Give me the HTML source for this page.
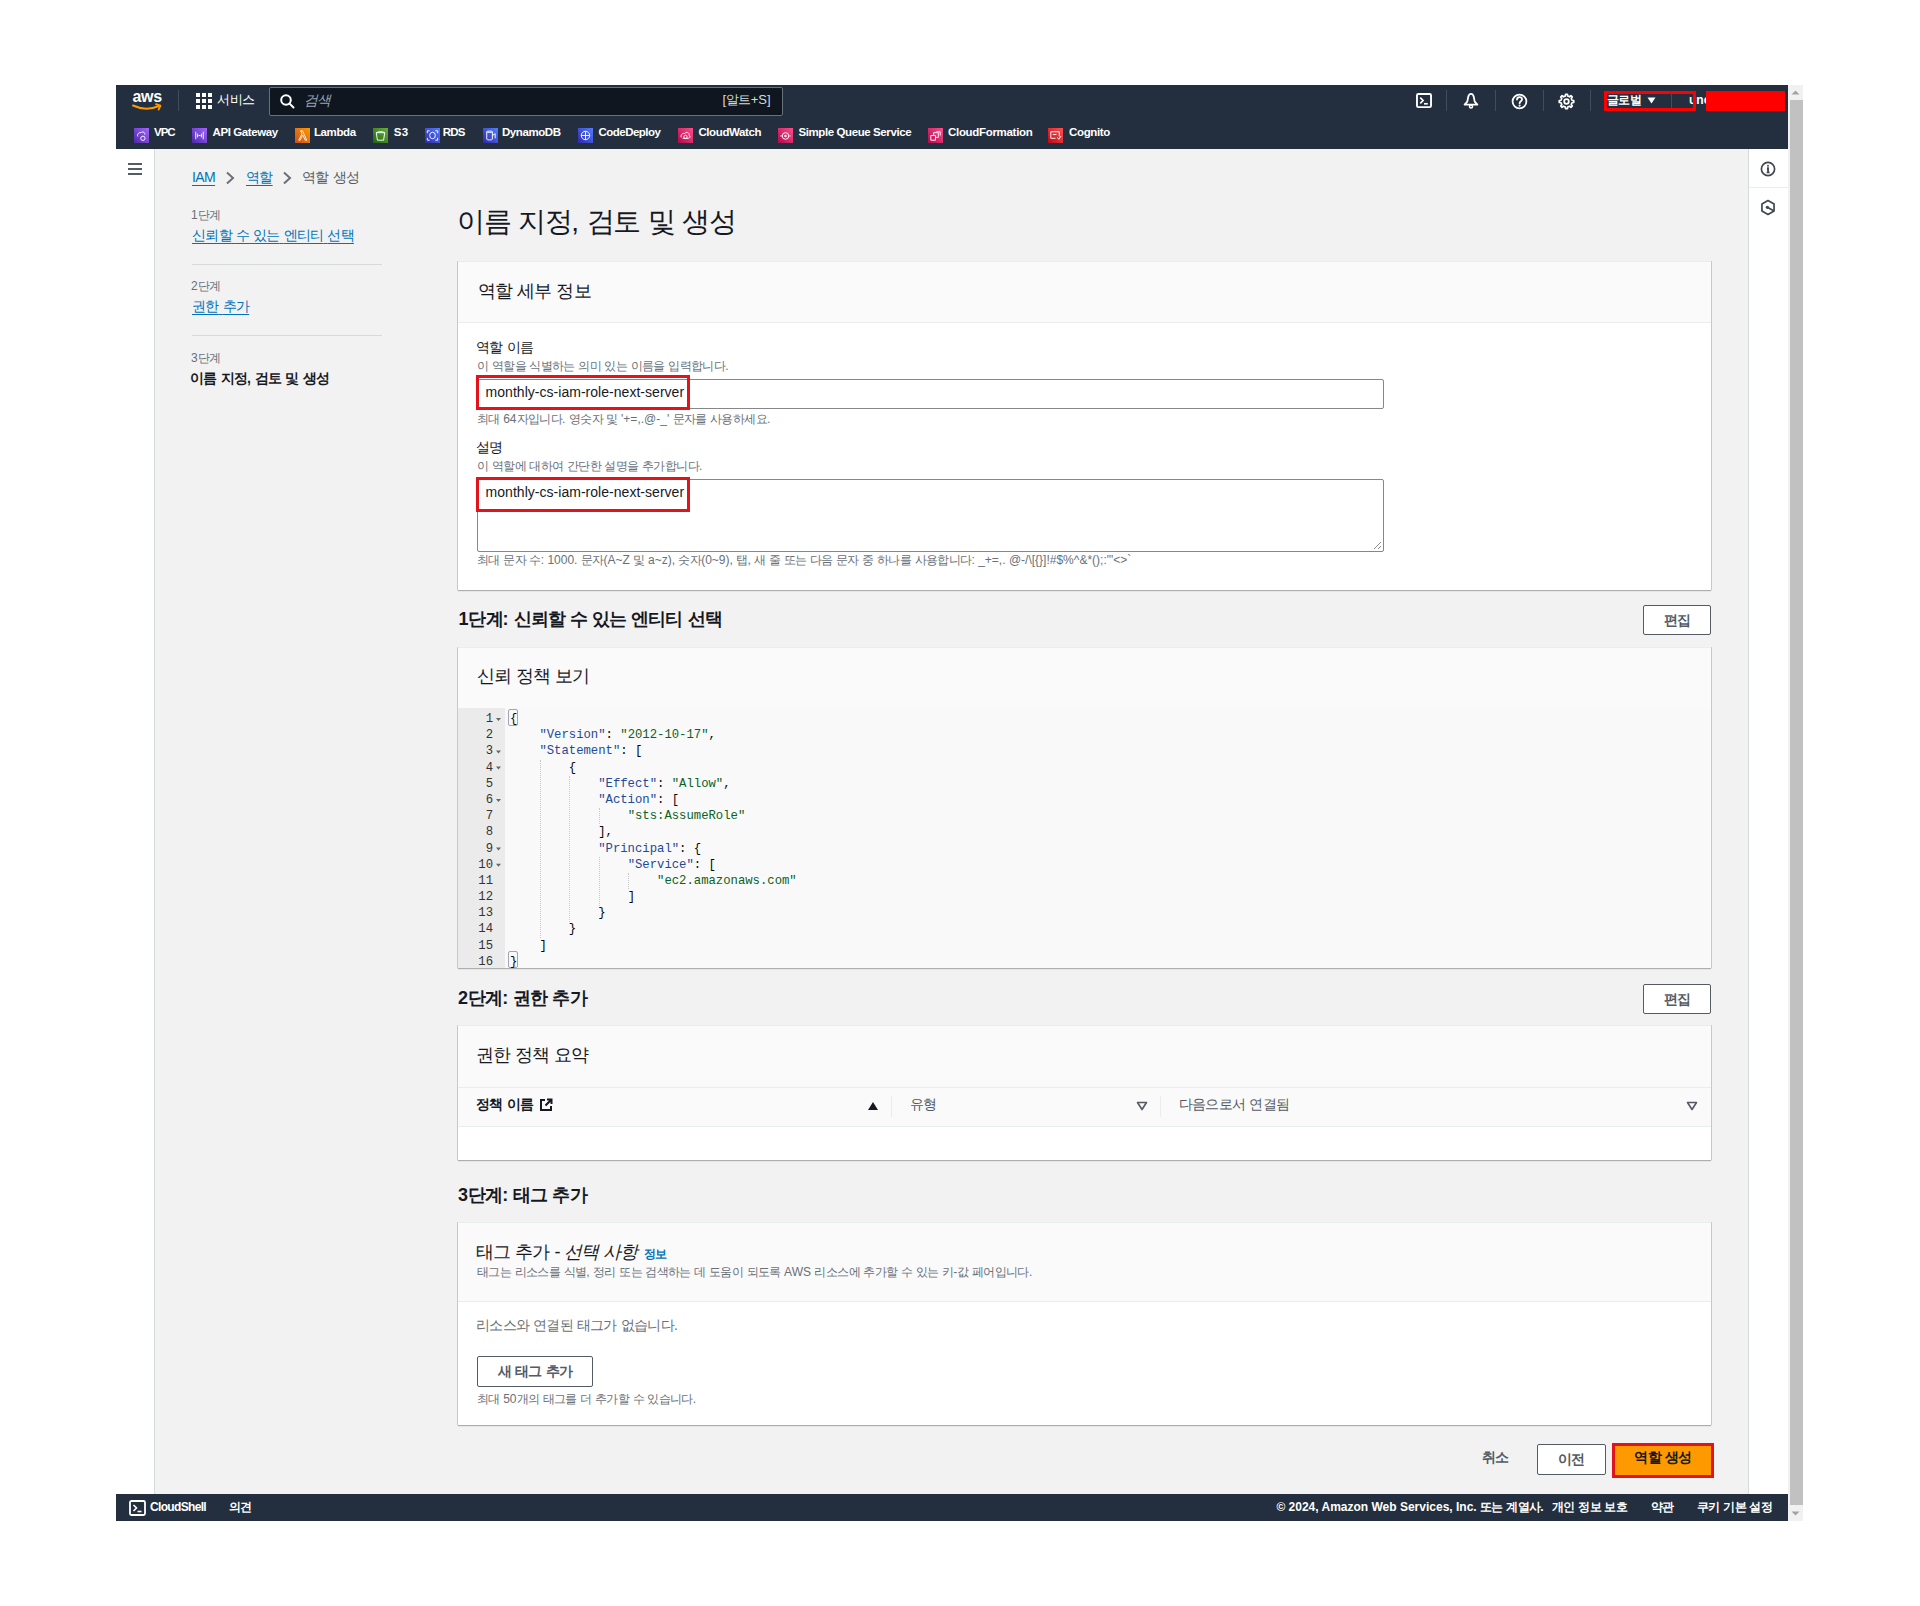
<!DOCTYPE html>
<html lang="ko">
<head>
<meta charset="utf-8">
<style>
html,body{margin:0;padding:0;}
body{width:1920px;height:1606px;background:#fff;position:relative;overflow:hidden;font-family:"Liberation Sans",sans-serif;color:#16191f;}
.a{position:absolute;}
.t{position:absolute;white-space:nowrap;line-height:20px;height:20px;}
.hdr{left:116px;top:85px;width:1672px;height:64px;background:#232f3e;}
.sep{position:absolute;width:1px;background:#414d5c;}
.svc{position:absolute;top:122px;height:20px;line-height:20px;font-size:11.5px;font-weight:bold;color:#fff;white-space:nowrap;}
.ico{position:absolute;top:128px;width:15px;height:15px;}
.lnk{color:#0073bb;text-decoration:underline;text-underline-offset:3px;}
.panel{position:absolute;left:458px;width:1253px;background:#fff;border-top:1px solid #eaeded;box-shadow:0 1px 1px 0 rgba(0,0,0,.28),1px 0 0 0 rgba(0,0,0,.13),-1px 0 0 0 rgba(0,0,0,.13);}
.ph{position:absolute;left:0;top:0;width:100%;background:#fafafa;border-bottom:1px solid #eaeded;}
.h2{font-size:18px;color:#16191f;}
.h3{font-size:18px;font-weight:bold;color:#16191f;}
.s12{font-size:12px;color:#687078;}
.btn{position:absolute;background:#fff;border:1px solid #545b64;border-radius:2px;box-sizing:border-box;text-align:center;font-size:14px;font-weight:bold;color:#545b64;}
.code{position:absolute;font-family:"Liberation Mono",monospace;font-size:12.25px;letter-spacing:0px;line-height:16.19px;white-space:pre;color:#080808;}
.k{font-size:1.3em;-webkit-text-stroke:0.45px currentColor;}
.v{color:#234a97;} .s{color:#0b6125;} .p{color:#080808;}
.hasko .k{font-size:1em;-webkit-text-stroke:0;letter-spacing:-0.05em;}
.hasko [id]:has(.k){letter-spacing:normal!important;}
.ig{position:absolute;width:0;border-left:1px dotted #c8c8c8;}
</style>
<script>
(function(){try{var c=document.createElement('canvas').getContext('2d');c.font='100px "Liberation Sans",sans-serif';var w=c.measureText('\uac00').width;if(w>85)document.documentElement.className+=' hasko';}catch(e){}})();
</script>
</head>
<body>

<!-- ===== top header ===== -->
<div class="a hdr"></div>
<!-- aws logo -->
<svg class="a" style="left:131px;top:89px" width="34" height="24" viewBox="0 0 34 24">
  <text x="1.5" y="13" font-family="Liberation Sans" font-weight="bold" font-size="16" fill="#fff" letter-spacing="-0.3">aws</text>
  <path d="M2 16.5 Q15 22.5 28 17" stroke="#ff9900" stroke-width="2" fill="none" stroke-linecap="round"/>
  <path d="M25 15.2 L29.5 16.6 L27.6 20.6" stroke="#ff9900" stroke-width="1.8" fill="none" stroke-linecap="round" stroke-linejoin="round"/>
</svg>
<div class="sep" style="left:178px;top:90px;height:21px"></div>
<!-- services grid -->
<svg class="a" style="left:196px;top:93px" width="16" height="16" viewBox="0 0 16 16" fill="#fff">
  <rect x="0" y="0" width="4" height="4"/><rect x="6" y="0" width="4" height="4"/><rect x="12" y="0" width="4" height="4"/>
  <rect x="0" y="6" width="4" height="4"/><rect x="6" y="6" width="4" height="4"/><rect x="12" y="6" width="4" height="4"/>
  <rect x="0" y="12" width="4" height="4"/><rect x="6" y="12" width="4" height="4"/><rect x="12" y="12" width="4" height="4"/>
</svg>
<div id="t1" class="t" style="letter-spacing:0.25px;left:217.3px;top:90px;font-size:13px;color:#fff;"><span class="k">서비스</span></div>
<!-- search -->
<div class="a" style="left:269px;top:87px;width:514px;height:29px;box-sizing:border-box;border:1px solid #687078;border-radius:2px;background:#0f1620;"></div>
<svg class="a" style="left:280px;top:94px" width="15" height="15" viewBox="0 0 15 15">
  <circle cx="6" cy="6" r="4.8" stroke="#fff" stroke-width="2" fill="none"/>
  <path d="M9.6 9.6 L13.5 13.5" stroke="#fff" stroke-width="2" stroke-linecap="round"/>
</svg>
<div id="t2" class="t" style="letter-spacing:0.00px;left:305.0px;top:90px;font-size:14px;color:#95a5b5;"><span style="display:inline-block;transform:skewX(-14deg)"><span class="k">검색</span></span></div>
<div id="t3" class="t" style="letter-spacing:0.76px;left:722.4px;top:90px;font-size:13px;color:#d5dbdb;">[<span class="k">알트</span>+S]</div>

<!-- right header icons -->
<svg class="a" style="left:1415.5px;top:93px" width="16" height="15" viewBox="0 0 17 16">
  <rect x="1" y="1" width="15" height="14" rx="1.5" stroke="#fff" stroke-width="2" fill="none"/>
  <path d="M4.5 5 L7.5 8 L4.5 11" stroke="#fff" stroke-width="1.8" fill="none"/>
  <path d="M8.5 11.5 H12.5" stroke="#fff" stroke-width="1.8"/>
</svg>
<div class="sep" style="left:1446px;top:90px;height:21px"></div>
<svg class="a" style="left:1463px;top:92px" width="16" height="17" viewBox="0 0 16 17">
  <path d="M8 1.8 C6.6 1.8 5.6 3 5.2 5 L4.3 9.6 L1.6 12.6 H14.4 L11.7 9.6 L10.8 5 C10.4 3 9.4 1.8 8 1.8 Z" stroke="#fff" stroke-width="1.8" fill="none" stroke-linejoin="round"/>
  <circle cx="8" cy="14.6" r="1.5" stroke="#fff" stroke-width="1.5" fill="none"/>
</svg>
<div class="sep" style="left:1495px;top:90px;height:21px"></div>
<svg class="a" style="left:1511px;top:93px" width="17" height="17" viewBox="0 0 17 17">
  <circle cx="8.5" cy="8.5" r="6.9" stroke="#fff" stroke-width="1.8" fill="none"/>
  <path d="M6 6.6 C6 4.9 7.1 4.1 8.5 4.1 C9.9 4.1 11 5 11 6.4 C11 8.2 8.6 8.3 8.6 10.2" stroke="#fff" stroke-width="1.8" fill="none" stroke-linecap="round"/>
  <circle cx="8.6" cy="12.6" r="1.1" fill="#fff"/>
</svg>
<div class="sep" style="left:1543px;top:90px;height:21px"></div>
<svg class="a" style="left:1558px;top:93px" width="17" height="17" viewBox="0 0 17 17">
  <path d="M13.97 7.28 L15.74 7.55 L15.74 9.45 L13.97 9.72 L13.23 11.50 L14.29 12.95 L12.95 14.29 L11.50 13.23 L9.72 13.97 L9.45 15.74 L7.55 15.74 L7.28 13.97 L5.50 13.23 L4.05 14.29 L2.71 12.95 L3.77 11.50 L3.03 9.72 L1.26 9.45 L1.26 7.55 L3.03 7.28 L3.77 5.50 L2.71 4.05 L4.05 2.71 L5.50 3.77 L7.28 3.03 L7.55 1.26 L9.45 1.26 L9.72 3.03 L11.50 3.77 L12.95 2.71 L14.29 4.05 L13.23 5.50 Z" stroke="#fff" stroke-width="1.7" fill="none" stroke-linejoin="round"/>
  <circle cx="8.5" cy="8.5" r="2.3" stroke="#fff" stroke-width="1.8" fill="none"/>
</svg>
<div class="sep" style="left:1590px;top:90px;height:21px"></div>
<!-- red redaction boxes -->
<div id="t4" class="t" style="letter-spacing:0.45px;left:1607.0px;top:90px;font-size:12px;color:#fff;font-weight:bold"><span class="k">글로벌</span></div>
<svg class="a" style="left:1647px;top:97px" width="9" height="7" viewBox="0 0 9 7"><path d="M0.5 0.5 H8.5 L4.5 6.5 Z" fill="#fff"/></svg>
<div class="a" style="left:1671px;top:93px;width:1px;height:16px;background:#414d5c"></div>
<div id="t5" class="t" style="left:1689px;top:90px;font-size:12px;color:#fff;font-weight:bold">unc</div>
<div class="a" style="left:1604px;top:91px;width:92px;height:20px;box-sizing:border-box;border:3px solid #f00;"></div>
<div class="a" style="left:1706px;top:91px;width:79px;height:20px;background:#f00;"></div>


<!-- service bar -->
<svg class="ico" style="left:134px" viewBox="0 0 16 16"><defs><linearGradient id="gp" x1="0" y1="1" x2="1" y2="0"><stop offset="0" stop-color="#4d27a8"/><stop offset="1" stop-color="#a166ff"/></linearGradient></defs><rect width="16" height="16" fill="url(#gp)"/><path d="M4 9 C3 7 5 4.5 7.5 5 C9 3.5 12 4.5 11.5 7" stroke="#fff" stroke-width="1" fill="none"/><circle cx="9.5" cy="11" r="2.3" stroke="#fff" stroke-width="1" fill="none"/></svg>
<div id="s1" class="svc" style="letter-spacing:-1.00px;left:154.0px">VPC</div>
<svg class="ico" style="left:192px" viewBox="0 0 16 16"><rect width="16" height="16" fill="url(#gp)"/><path d="M4 4 V12 M12 4 V12 M6 6 L6 10 M10 6 V10 M7 8 H9" stroke="#fff" stroke-width="1" fill="none"/></svg>
<div id="s2" class="svc" style="letter-spacing:-0.40px;left:212.5px">API Gateway</div>
<svg class="ico" style="left:295px" viewBox="0 0 16 16"><defs><linearGradient id="go" x1="0" y1="1" x2="1" y2="0"><stop offset="0" stop-color="#c8511b"/><stop offset="1" stop-color="#ff9900"/></linearGradient></defs><rect width="16" height="16" fill="url(#go)"/><path d="M4 13 L7.5 6 L6 3 H8 L12.5 13 H11 L8.2 7.5 L5.5 13 Z" stroke="#fff" stroke-width="0.9" fill="none"/></svg>
<div id="s3" class="svc" style="letter-spacing:-0.40px;left:314.0px">Lambda</div>
<svg class="ico" style="left:373px" viewBox="0 0 16 16"><defs><linearGradient id="gg" x1="0" y1="1" x2="1" y2="0"><stop offset="0" stop-color="#1b660f"/><stop offset="1" stop-color="#6cae3e"/></linearGradient></defs><rect width="16" height="16" fill="url(#gg)"/><path d="M3.5 5 H12.5 L11.3 13 H4.7 Z M3.5 5 C6 3.5 10 3.5 12.5 5" stroke="#fff" stroke-width="1" fill="none"/></svg>
<div id="s4" class="svc" style="letter-spacing:0.20px;left:393.8px">S3</div>
<svg class="ico" style="left:425px" viewBox="0 0 16 16"><defs><linearGradient id="gb" x1="0" y1="1" x2="1" y2="0"><stop offset="0" stop-color="#2e27ad"/><stop offset="1" stop-color="#527fff"/></linearGradient></defs><rect width="16" height="16" fill="url(#gb)"/><ellipse cx="8" cy="8" rx="3" ry="3.5" stroke="#fff" stroke-width="1" fill="none"/><path d="M2.5 3 H5 M2.5 3 V5.5 M13.5 3 H11 M13.5 3 V5.5 M2.5 13 H5 M2.5 13 V10.5 M13.5 13 H11 M13.5 13 V10.5" stroke="#fff" stroke-width="1"/></svg>
<div id="s5" class="svc" style="letter-spacing:-0.78px;left:442.8px">RDS</div>
<svg class="ico" style="left:483px" viewBox="0 0 16 16"><rect width="16" height="16" fill="url(#gb)"/><path d="M4 4 C4 3 10 3 10 4 V12 C10 13 4 13 4 12 Z M4 4 C4 5 10 5 10 4 M10 8 L13 6 V11" stroke="#fff" stroke-width="1" fill="none"/></svg>
<div id="s6" class="svc" style="letter-spacing:-0.43px;left:502.0px">DynamoDB</div>
<svg class="ico" style="left:578px" viewBox="0 0 16 16"><rect width="16" height="16" fill="url(#gb)"/><circle cx="8" cy="8" r="4.5" stroke="#fff" stroke-width="1" fill="none"/><path d="M3.5 8 H12.5 M8 3.5 V12.5" stroke="#fff" stroke-width="1"/></svg>
<div id="s7" class="svc" style="letter-spacing:-0.50px;left:598.4px">CodeDeploy</div>
<svg class="ico" style="left:678px" viewBox="0 0 16 16"><defs><linearGradient id="gk" x1="0" y1="1" x2="1" y2="0"><stop offset="0" stop-color="#b0084d"/><stop offset="1" stop-color="#ff4f8b"/></linearGradient></defs><rect width="16" height="16" fill="url(#gk)"/><path d="M3.5 10 C2.5 8 4.5 5 7 6 C8.5 3.5 12.5 5 12 8 C13.5 9 12.5 11 11 11 H5" stroke="#fff" stroke-width="1" fill="none"/><circle cx="8" cy="9.5" r="1.8" stroke="#fff" stroke-width="0.9" fill="none"/></svg>
<div id="s8" class="svc" style="letter-spacing:-0.39px;left:698.4px">CloudWatch</div>
<svg class="ico" style="left:778px" viewBox="0 0 16 16"><rect width="16" height="16" fill="url(#gk)"/><circle cx="8" cy="8.5" r="3.5" stroke="#fff" stroke-width="1" fill="none"/><circle cx="8" cy="8.5" r="1.3" fill="#fff"/><path d="M2.5 8.5 H4 M12 8.5 H13.5" stroke="#fff" stroke-width="1"/></svg>
<div id="s9" class="svc" style="letter-spacing:-0.40px;left:798.4px">Simple Queue Service</div>
<svg class="ico" style="left:928px" viewBox="0 0 16 16"><rect width="16" height="16" fill="url(#gk)"/><path d="M3 8 H8 V13 H3 Z M6 8 V5 H11 V10 H8 M9 4 L13 4 L13 8" stroke="#fff" stroke-width="1" fill="none"/></svg>
<div id="s10" class="svc" style="letter-spacing:-0.31px;left:948.0px">CloudFormation</div>
<svg class="ico" style="left:1048px" viewBox="0 0 16 16"><defs><linearGradient id="gr" x1="0" y1="1" x2="1" y2="0"><stop offset="0" stop-color="#bd0816"/><stop offset="1" stop-color="#ff5252"/></linearGradient></defs><rect width="16" height="16" fill="url(#gr)"/><path d="M3 4 H12 V9 M3 4 V11 H8 M5 7 H9 M10 10 L11.5 12 L14 8.5" stroke="#fff" stroke-width="1" fill="none"/></svg>
<div id="s11" class="svc" style="letter-spacing:-0.34px;left:1069.0px">Cognito</div>

<!-- ===== frame ===== -->
<div class="a" style="left:116px;top:149px;width:38px;height:1345px;background:#fff;"></div>
<div class="a" style="left:154px;top:149px;width:1px;height:1345px;background:#d5dbdb;"></div>
<div class="a" style="left:155px;top:149px;width:1593px;height:1345px;background:#f2f2f2;"></div>
<div class="a" style="left:1748px;top:149px;width:1px;height:1345px;background:#d5dbdb;"></div>
<div class="a" style="left:1749px;top:149px;width:39px;height:1345px;background:#fff;"></div>
<!-- hamburger -->
<svg class="a" style="left:127px;top:162px" width="16" height="14" viewBox="0 0 16 14"><path d="M1 2 H15 M1 7 H15 M1 12 H15" stroke="#545b64" stroke-width="2"/></svg>
<!-- right panel icons -->
<svg class="a" style="left:1759px;top:159.5px" width="18" height="18" viewBox="0 0 18 18"><circle cx="9" cy="9" r="6.6" stroke="#414750" stroke-width="1.7" fill="none"/><path d="M8 8.2 H9.1 V12.3 M7.6 12.5 H10.6" stroke="#414750" stroke-width="1.7"/><circle cx="9" cy="5.7" r="0.95" fill="#414750"/></svg>
<div class="a" style="left:1749px;top:187px;width:39px;height:1px;background:#eaeded;"></div>
<svg class="a" style="left:1759px;top:198px" width="18" height="19" viewBox="0 0 18 19"><path d="M9 2.5 L15.06 6 V13 L9 16.5 L2.94 13 V6 Z" stroke="#414750" stroke-width="1.7" fill="none" stroke-linejoin="round"/><path d="M8.4 9.3 L14.6 12.7" stroke="#414750" stroke-width="1.7"/><circle cx="8.4" cy="9.3" r="1.6" fill="#414750"/></svg>

<!-- scrollbar -->
<div class="a" style="left:1788px;top:85px;width:15px;height:1436px;background:#f1f1f1;"></div>
<svg class="a" style="left:1788px;top:85px" width="15" height="15" viewBox="0 0 15 15"><path d="M3.5 9.5 H11.5 L7.5 5.5 Z" fill="#a3a3a3"/></svg>
<div class="a" style="left:1790px;top:100px;width:13px;height:1405px;background:#c1c1c1;"></div>
<svg class="a" style="left:1788px;top:1506px" width="15" height="15" viewBox="0 0 15 15"><path d="M3.5 5.5 H11.5 L7.5 9.5 Z" fill="#a3a3a3"/></svg>

<!-- footer -->
<div class="a" style="left:116px;top:1494px;width:1672px;height:27px;background:#232f3e;"></div>
<svg class="a" style="left:129px;top:1500px" width="17" height="16" viewBox="0 0 17 16"><rect x="1" y="1" width="15" height="14" rx="1.5" stroke="#fff" stroke-width="1.8" fill="none"/><path d="M4.5 5 L7.5 8 L4.5 11" stroke="#fff" stroke-width="1.6" fill="none"/><path d="M8.5 11.5 H12.5" stroke="#fff" stroke-width="1.6"/></svg>
<div id="t6" class="t" style="letter-spacing:-0.67px;left:150.0px;top:1497px;font-size:12px;font-weight:bold;color:#fff">CloudShell</div>
<div id="t7" class="t" style="letter-spacing:2.40px;left:228.7px;top:1497px;font-size:12px;font-weight:bold;color:#fff"><span class="k">의견</span></div>
<div id="t8" class="t" style="letter-spacing:-0.51px;left:1276.4px;top:1497px;font-size:12px;font-weight:bold;color:#fff">© 2024, Amazon Web Services, Inc. <span class="k">또는</span> <span class="k">계열사</span>.</div>
<div id="t9" class="t" style="letter-spacing:0.01px;left:1552.0px;top:1497px;font-size:12px;font-weight:bold;color:#fff"><span class="k">개인</span> <span class="k">정보</span> <span class="k">보호</span></div>
<div id="t10" class="t" style="letter-spacing:2.10px;left:1650.6px;top:1497px;font-size:12px;font-weight:bold;color:#fff"><span class="k">약관</span></div>
<div id="t11" class="t" style="letter-spacing:-0.03px;left:1697.0px;top:1497px;font-size:12px;font-weight:bold;color:#fff"><span class="k">쿠키</span> <span class="k">기본</span> <span class="k">설정</span></div>


<!-- breadcrumb -->
<div id="t12" class="t" style="letter-spacing:-0.60px;left:192.0px;top:167px;font-size:14px"><span class="lnk">IAM</span></div>
<svg class="a" style="left:224px;top:171px" width="12" height="14" viewBox="0 0 12 14"><path d="M3 1.5 L9 7 L3 12.5" stroke="#687078" stroke-width="2" fill="none"/></svg>
<div id="t13" class="t" style="letter-spacing:-1.00px;left:246.0px;top:167px;font-size:14px"><span class="lnk"><span class="k">역할</span></span></div>
<svg class="a" style="left:281px;top:171px" width="12" height="14" viewBox="0 0 12 14"><path d="M3 1.5 L9 7 L3 12.5" stroke="#687078" stroke-width="2" fill="none"/></svg>
<div id="t14" class="t" style="letter-spacing:0.00px;left:302.0px;top:167px;font-size:14px;color:#545b64"><span class="k">역할</span> <span class="k">생성</span></div>

<!-- wizard steps -->
<div id="t15" class="t s12" style="letter-spacing:0.50px;left:191.0px;top:205px">1<span class="k">단계</span></div>
<div id="t16" class="t" style="letter-spacing:-0.37px;left:192.0px;top:225px;font-size:14px"><span class="lnk"><span class="k">신뢰할</span> <span class="k">수</span> <span class="k">있는</span> <span class="k">엔티티</span> <span class="k">선택</span></span></div>
<div class="a" style="left:192px;top:264px;width:190px;height:1px;background:#d5dbdb"></div>
<div id="t17" class="t s12" style="letter-spacing:0.50px;left:191.0px;top:276px">2<span class="k">단계</span></div>
<div id="t18" class="t" style="letter-spacing:-0.25px;left:192.0px;top:296px;font-size:14px"><span class="lnk"><span class="k">권한</span> <span class="k">추가</span></span></div>
<div class="a" style="left:192px;top:335px;width:190px;height:1px;background:#d5dbdb"></div>
<div id="t19" class="t s12" style="letter-spacing:0.50px;left:191.0px;top:348px">3<span class="k">단계</span></div>
<div id="t20" class="t" style="letter-spacing:-0.15px;left:190.0px;top:368px;font-size:14px;font-weight:bold"><span class="k">이름</span> <span class="k">지정</span>, <span class="k">검토</span> <span class="k">및</span> <span class="k">생성</span></div>

<!-- title -->
<div id="title" class="a" style="letter-spacing:-0.61px;left:457.0px;top:204px;font-size:28px;line-height:36px;white-space:nowrap;color:#16191f"><span class="k">이름</span> <span class="k">지정</span>, <span class="k">검토</span> <span class="k">및</span> <span class="k">생성</span></div>

<!-- ===== panel 1: role details ===== -->
<div class="panel" style="top:261px;height:328px">
  <div class="ph" style="height:60px"></div>
</div>
<div id="t21" class="t h2" style="letter-spacing:-0.43px;left:478.0px;top:281px"><span class="k">역할</span> <span class="k">세부</span> <span class="k">정보</span></div>
<div id="t22" class="t" style="letter-spacing:0.00px;left:476.0px;top:337px;font-size:14px"><span class="k">역할</span> <span class="k">이름</span></div>
<div id="t23" class="t s12" style="letter-spacing:-0.29px;left:477.0px;top:356px"><span class="k">이</span> <span class="k">역할을</span> <span class="k">식별하는</span> <span class="k">의미</span> <span class="k">있는</span> <span class="k">이름을</span> <span class="k">입력합니다</span>.</div>
<div class="a" style="left:477px;top:379px;width:907px;height:30px;box-sizing:border-box;border:1px solid #878787;border-radius:2px;background:#fff"></div>
<div id="t24" class="t" style="letter-spacing:0.03px;left:485.6px;top:382px;font-size:14px">monthly-cs-iam-role-next-server</div>
<div class="a" style="left:476px;top:375px;width:214px;height:35px;box-sizing:border-box;border:3px solid #e3131b"></div>
<div id="t25" class="t s12" style="letter-spacing:-0.27px;left:477.0px;top:409px"><span class="k">최대</span> 64<span class="k">자입니다</span>. <span class="k">영숫자</span> <span class="k">및</span> '+=,.@-_' <span class="k">문자를</span> <span class="k">사용하세요</span>.</div>
<div id="t26" class="t" style="letter-spacing:2.00px;left:476.0px;top:437px;font-size:14px"><span class="k">설명</span></div>
<div id="t27" class="t s12" style="letter-spacing:-0.29px;left:477.0px;top:456px"><span class="k">이</span> <span class="k">역할에</span> <span class="k">대하여</span> <span class="k">간단한</span> <span class="k">설명을</span> <span class="k">추가합니다</span>.</div>
<div class="a" style="left:477px;top:479px;width:907px;height:73px;box-sizing:border-box;border:1px solid #878787;border-radius:2px;background:#fff"></div>
<svg class="a" style="left:1372px;top:540px" width="10" height="10" viewBox="0 0 10 10"><path d="M9 2 L2 9 M9 6 L6 9" stroke="#8a8a8a" stroke-width="1"/></svg>
<div id="t28" class="t" style="letter-spacing:0.03px;left:485.6px;top:482px;font-size:14px">monthly-cs-iam-role-next-server</div>
<div class="a" style="left:476px;top:477px;width:214px;height:35px;box-sizing:border-box;border:3px solid #e3131b"></div>
<div id="t29" class="t s12" style="letter-spacing:-0.20px;left:477.0px;top:550px"><span class="k">최대</span> <span class="k">문자</span> <span class="k">수</span>: 1000. <span class="k">문자</span>(A~Z <span class="k">및</span> a~z), <span class="k">숫자</span>(0~9), <span class="k">탭</span>, <span class="k">새</span> <span class="k">줄</span> <span class="k">또는</span> <span class="k">다음</span> <span class="k">문자</span> <span class="k">중</span> <span class="k">하나를</span> <span class="k">사용합니다</span>: _+=,. @-/\[{}]!#$%^&amp;*();:"'&lt;&gt;`</div>

<!-- ===== step 1 ===== -->
<div id="t30" class="t h3" style="letter-spacing:-0.43px;left:458.4px;top:609px">1<span class="k">단계</span>: <span class="k">신뢰할</span> <span class="k">수</span> <span class="k">있는</span> <span class="k">엔티티</span> <span class="k">선택</span></div>
<div id="b1" class="btn" style="letter-spacing:2.10px;left:1643px;top:605px;width:68px;height:30px;line-height:28px"><span class="k">편집</span></div>

<div class="panel" style="top:647px;height:320px">
  <div class="ph" style="height:60px"></div>
</div>
<div id="t31" class="t h2" style="letter-spacing:-0.24px;left:476.9px;top:666px"><span class="k">신뢰</span> <span class="k">정책</span> <span class="k">보기</span></div>
<div class="a" style="left:458px;top:708px;width:1253px;height:260px;background:#f9f9f9"></div>
<div class="a" style="left:458px;top:708px;width:47px;height:260px;background:#ebebeb"></div>
<div class="code" style="left:458px;top:711px;width:35px;text-align:right;color:#333">1
2
3
4
5
6
7
8
9
10
11
12
13
14
15
16</div>
<svg class="a" style="left:495px;top:711px" width="8" height="260" viewBox="0 0 8 260" fill="#666">
  <path d="M1 7 H6 L3.5 10 Z"/>
  <path d="M1 39.4 H6 L3.5 42.4 Z"/>
  <path d="M1 55.6 H6 L3.5 58.6 Z"/>
  <path d="M1 88 H6 L3.5 91 Z"/>
  <path d="M1 136.5 H6 L3.5 139.5 Z"/>
  <path d="M1 152.7 H6 L3.5 155.7 Z"/>
</svg>
<div class="a" style="left:508px;top:709px;width:10px;height:17px;box-sizing:border-box;border:1px solid rgba(75,75,126,.5);border-radius:2px"></div>
<div class="a" style="left:508px;top:951px;width:10px;height:17px;box-sizing:border-box;border:1px solid rgba(75,75,126,.5);border-radius:2px"></div>
<div class="ig" style="left:540px;top:760px;height:178px"></div>
<div class="ig" style="left:569px;top:776px;height:146px"></div>
<div class="ig" style="left:599px;top:808px;height:16px"></div>
<div class="ig" style="left:599px;top:857px;height:49px"></div>
<div class="ig" style="left:628px;top:873px;height:16px"></div>
<div class="code" style="left:510px;top:711px">{
    <span class="v">"Version"</span>: <span class="s">"2012-10-17"</span>,
    <span class="v">"Statement"</span>: <span class="p">[</span>
        {
            <span class="v">"Effect"</span>: <span class="s">"Allow"</span>,
            <span class="v">"Action"</span>: <span class="p">[</span>
                <span class="s">"sts:AssumeRole"</span>
            <span class="p">]</span>,
            <span class="v">"Principal"</span>: {
                <span class="v">"Service"</span>: <span class="p">[</span>
                    <span class="s">"ec2.amazonaws.com"</span>
                <span class="p">]</span>
            }
        }
    <span class="p">]</span>
}</div>

<!-- ===== step 2 ===== -->
<div id="t32" class="t h3" style="letter-spacing:-0.32px;left:458.0px;top:988px">2<span class="k">단계</span>: <span class="k">권한</span> <span class="k">추가</span></div>
<div id="b2" class="btn" style="letter-spacing:2.10px;left:1643px;top:984px;width:68px;height:30px;line-height:28px"><span class="k">편집</span></div>
<div class="panel" style="top:1025px;height:134px">
  <div class="ph" style="height:61px"></div>
  <div class="a" style="left:0;top:62px;width:100%;height:38px;background:#fafafa;border-bottom:1px solid #eaeded"></div>
</div>
<div id="t33" class="t h2" style="letter-spacing:0.02px;left:475.8px;top:1045px"><span class="k">권한</span> <span class="k">정책</span> <span class="k">요약</span></div>
<div id="t34" class="t" style="letter-spacing:0.14px;left:476.0px;top:1094px;font-size:14px;font-weight:bold;color:#16191f"><span class="k">정책</span> <span class="k">이름</span></div>
<svg class="a" style="left:539px;top:1098px" width="14" height="14" viewBox="0 0 14 14"><path d="M6 2 H2 V12 H12 V8" stroke="#16191f" stroke-width="2" fill="none"/><path d="M8 1.5 H12.5 V6 M12.5 1.5 L6.5 7.5" stroke="#16191f" stroke-width="2" fill="none"/></svg>
<svg class="a" style="left:867px;top:1101px" width="12" height="10" viewBox="0 0 12 10"><path d="M1 9 H11 L6 1 Z" fill="#16191f"/></svg>
<div class="a" style="left:891px;top:1096px;width:1px;height:21px;background:#eaeded"></div>
<div id="t35" class="t" style="letter-spacing:2.40px;left:909.6px;top:1094px;font-size:14px;color:#545b64"><span class="k">유형</span></div>
<svg class="a" style="left:1136px;top:1101px" width="12" height="10" viewBox="0 0 12 10"><path d="M1.5 1.5 H10.5 L6 8.5 Z" stroke="#545b64" stroke-width="1.6" fill="none" stroke-linejoin="round"/></svg>
<div class="a" style="left:1160px;top:1096px;width:1px;height:21px;background:#eaeded"></div>
<div id="t36" class="t" style="letter-spacing:-0.16px;left:1178.8px;top:1094px;font-size:14px;color:#545b64"><span class="k">다음으로서</span> <span class="k">연결됨</span></div>
<svg class="a" style="left:1686px;top:1101px" width="12" height="10" viewBox="0 0 12 10"><path d="M1.5 1.5 H10.5 L6 8.5 Z" stroke="#545b64" stroke-width="1.6" fill="none" stroke-linejoin="round"/></svg>

<!-- ===== step 3 ===== -->
<div id="t37" class="t h3" style="letter-spacing:-0.33px;left:458.0px;top:1185px">3<span class="k">단계</span>: <span class="k">태그</span> <span class="k">추가</span></div>
<div class="panel" style="top:1222px;height:202px">
  <div class="ph" style="height:78px"></div>
</div>
<div id="t38" class="t h2" style="letter-spacing:-0.02px;left:476.0px;top:1242px"><span class="k">태그</span> <span class="k">추가</span> - <span style="display:inline-block;transform:skewX(-14deg)"><span class="k">선택</span> <span class="k">사항</span></span> <span style="font-size:12px;font-weight:bold;color:#0073bb"><span class="k">정보</span></span></div>
<div id="t39" class="t s12" style="letter-spacing:-0.31px;left:477.0px;top:1262px"><span class="k">태그는</span> <span class="k">리소스를</span> <span class="k">식별</span>, <span class="k">정리</span> <span class="k">또는</span> <span class="k">검색하는</span> <span class="k">데</span> <span class="k">도움이</span> <span class="k">되도록</span> AWS <span class="k">리소스에</span> <span class="k">추가할</span> <span class="k">수</span> <span class="k">있는</span> <span class="k">키</span>-<span class="k">값</span> <span class="k">페어입니다</span>.</div>
<div id="t40" class="t" style="letter-spacing:-0.24px;left:476.0px;top:1315px;font-size:14px;color:#687078"><span class="k">리소스와</span> <span class="k">연결된</span> <span class="k">태그가</span> <span class="k">없습니다</span>.</div>
<div id="b3" class="btn" style="letter-spacing:0.28px;left:477px;top:1356px;width:116px;height:31px;line-height:29px"><span class="k">새</span> <span class="k">태그</span> <span class="k">추가</span></div>
<div id="t41" class="t s12" style="letter-spacing:-0.26px;left:477.0px;top:1389px"><span class="k">최대</span> 50<span class="k">개의</span> <span class="k">태그를</span> <span class="k">더</span> <span class="k">추가할</span> <span class="k">수</span> <span class="k">있습니다</span>.</div>

<!-- bottom actions -->
<div id="t42" class="t" style="letter-spacing:2.20px;left:1481.6px;top:1447px;font-size:14px;font-weight:bold;color:#545b64"><span class="k">취소</span></div>
<div id="b4" class="btn" style="letter-spacing:2.90px;left:1537px;top:1444px;width:69px;height:31px;line-height:29px"><span class="k">이전</span></div>
<div class="a" style="left:1612px;top:1443px;width:102px;height:35px;box-sizing:border-box;border:3px solid #e3131b;background:#ff9900"></div>
<div id="t43" class="t" style="letter-spacing:0.44px;left:1612px;top:1447px;width:102px;text-align:center;font-size:14px;font-weight:bold;color:#16191f"><span class="k">역할</span> <span class="k">생성</span></div>

</body>
</html>
